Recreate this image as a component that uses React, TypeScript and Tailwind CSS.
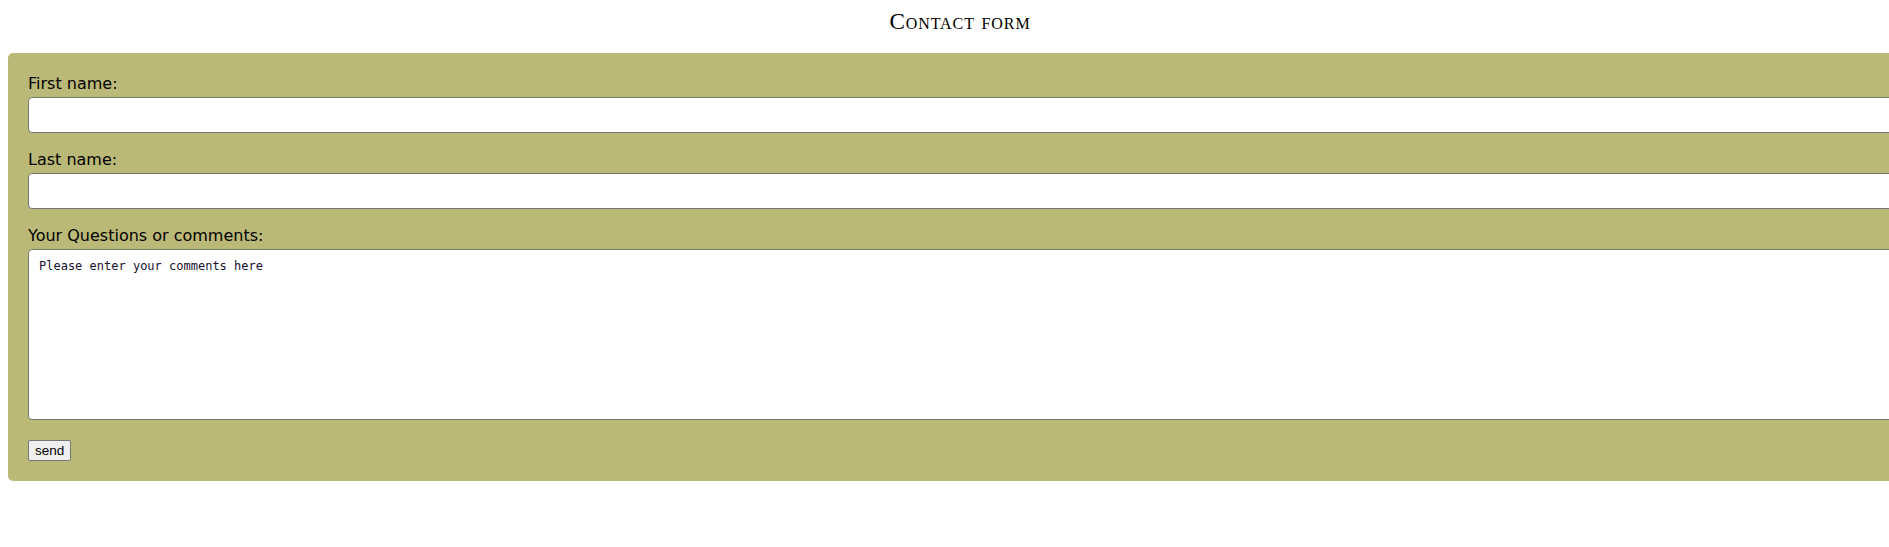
export default function App() {
  return (
    <div className="w-full h-[547px] overflow-hidden bg-white">
      <div className="w-[1920px]">
        <h1 className="pt-[8px] h-[53px] text-center text-[23px] leading-[28px] tracking-[0.04em] text-black [font-variant:small-caps] font-['Liberation_Serif',serif]">
          Contact form
        </h1>
        <form className="ml-2 w-[1960px] rounded-[5px] bg-[#bbb977] px-5 pt-[19px] pb-5 font-['DejaVu_Sans',Verdana,sans-serif] text-black">
          <label className="block text-[16px] leading-[24px]">First name:</label>
          <input
            type="text"
            className="mt-px block h-9 w-full rounded-[4px] border border-[#767676] bg-white"
          />
          <label className="mt-[15px] block text-[16px] leading-[24px]">Last name:</label>
          <input
            type="text"
            className="mt-px block h-9 w-full rounded-[4px] border border-[#767676] bg-white"
          />
          <label className="mt-[15px] block text-[16px] leading-[24px]">Your Questions or comments:</label>
          <textarea
            defaultValue="Please enter your comments here"
            className="mt-px block h-[171px] w-[1896px] resize rounded-[4px] border border-[#767676] bg-white px-[10px] py-[8px] text-[12px] leading-[16px] font-['DejaVu_Sans_Mono',monospace] text-[#1a1030]"
          />
          <button
            type="button"
            className="mt-5 block h-[21px] rounded-[2px] border border-[#767676] bg-[#efefef] px-[6px] text-[13.5px] leading-[19px] font-['Liberation_Sans',Arial,sans-serif]"
          >
            send
          </button>
        </form>
      </div>
    </div>
  );
}
